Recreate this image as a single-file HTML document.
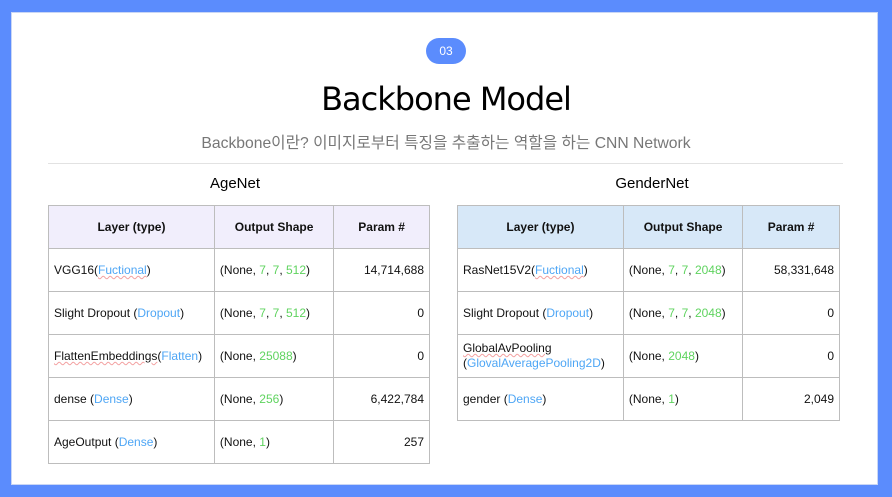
<!DOCTYPE html>
<html><head><meta charset="utf-8"><style>
*{margin:0;padding:0;box-sizing:border-box}
body{width:892px;height:497px;background:#5b8cfd;position:relative;overflow:hidden;font-family:"Liberation Sans","Noto Sans CJK KR",sans-serif}
.panel{position:absolute;left:11px;top:12px;width:867px;height:473px;background:#fff;border:1px solid #c9d6f5}
.pill{position:absolute;left:426px;top:38px;width:40px;height:26px;border-radius:13px;background:#5b8cfd;color:#fff;font-size:12px;text-align:center;line-height:26px}
.title{position:absolute;left:0;width:892px;top:80px;text-align:center;font-size:32px;font-family:"DejaVu Sans","Liberation Sans",sans-serif;font-weight:normal;letter-spacing:-1px;color:#000}
.sub{position:absolute;left:0;width:892px;top:130px;text-align:center;font-size:15.7px;color:#777;font-family:"Liberation Sans","Noto Sans CJK KR",sans-serif}
.hr{position:absolute;left:48px;width:795px;top:163px;height:1px;background:#e2e2e2}
.cap{position:absolute;top:175px;font-size:15px;color:#000;text-align:center}
table{position:absolute;top:205px;border-collapse:collapse;font-size:12px;color:#111}
td,th{border:1px solid #bdbdbd;height:43px;padding:0 5px;vertical-align:middle}
th{font-weight:bold;font-size:12px;text-align:center}
td.r{text-align:right}
.b{color:#4ea6f5}.g{color:#5fd35f}
.u{text-decoration:underline wavy #f3a0a0;text-decoration-thickness:1px}
</style></head><body>
<div class="panel"></div>
<div class="pill">03</div>
<div class="title">Backbone Model</div>
<div class="sub">Backbone이란? 이미지로부터 특징을 추출하는 역할을 하는 CNN Network</div>
<div class="hr"></div>
<div class="cap" style="left:135px;width:200px">AgeNet</div>
<div class="cap" style="left:552px;width:200px">GenderNet</div>
<table style="left:48px;width:382px">
<colgroup><col style="width:166px"><col style="width:120px"><col style="width:96px"></colgroup>
<tr style="background:#f1eefc"><th>Layer (type)</th><th>Output Shape</th><th>Param #</th></tr>
<tr><td>VGG16(<span class="b u">Fuctional</span>)</td><td>(None, <span class="g">7</span>, <span class="g">7</span>, <span class="g">512</span>)</td><td class="r">14,714,688</td></tr>
<tr><td>Slight Dropout (<span class="b">Dropout</span>)</td><td>(None, <span class="g">7</span>, <span class="g">7</span>, <span class="g">512</span>)</td><td class="r">0</td></tr>
<tr><td><span class="u">FlattenEmbeddings</span>(<span class="b">Flatten</span>)</td><td>(None, <span class="g">25088</span>)</td><td class="r">0</td></tr>
<tr><td>dense (<span class="b">Dense</span>)</td><td>(None, <span class="g">256</span>)</td><td class="r">6,422,784</td></tr>
<tr><td>AgeOutput (<span class="b">Dense</span>)</td><td>(None, <span class="g">1</span>)</td><td class="r">257</td></tr>
</table>
<table style="left:457px;width:383px">
<colgroup><col style="width:166px"><col style="width:120px"><col style="width:97px"></colgroup>
<tr style="background:#d7e8f8"><th>Layer (type)</th><th>Output Shape</th><th>Param #</th></tr>
<tr><td>RasNet15V2(<span class="b u">Fuctional</span>)</td><td>(None, <span class="g">7</span>, <span class="g">7</span>, <span class="g">2048</span>)</td><td class="r">58,331,648</td></tr>
<tr><td>Slight Dropout (<span class="b">Dropout</span>)</td><td>(None, <span class="g">7</span>, <span class="g">7</span>, <span class="g">2048</span>)</td><td class="r">0</td></tr>
<tr><td style="line-height:15px"><span class="u">GlobalAvPooling</span><br>(<span class="b">GlovalAveragePooling2D</span>)</td><td>(None, <span class="g">2048</span>)</td><td class="r">0</td></tr>
<tr><td>gender (<span class="b">Dense</span>)</td><td>(None, <span class="g">1</span>)</td><td class="r">2,049</td></tr>
</table>
</body></html>
